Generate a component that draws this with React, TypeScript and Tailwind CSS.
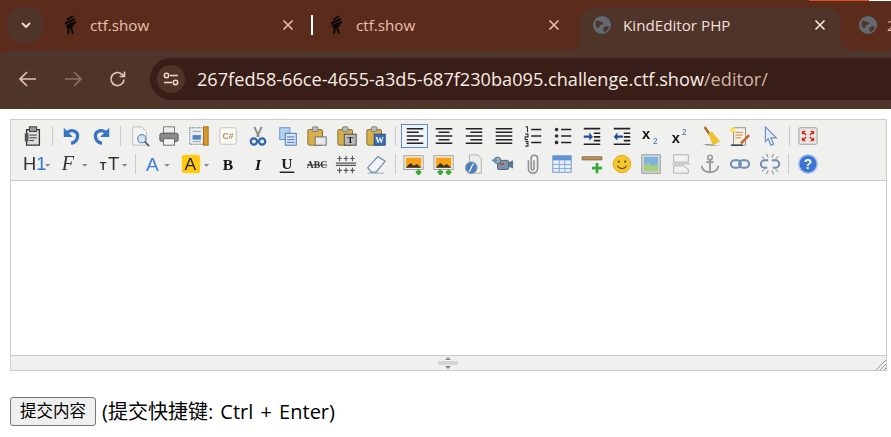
import type { ReactNode } from "react";

const S = ({ children, w = 22 }: { children: ReactNode; w?: number }) => (
  <svg width={w} height="22" viewBox={`0 0 ${(w * 24) / 22} 24`} className="blur-[0.35px]">
    {children}
  </svg>
);

const Arrow = ({ flip }: { flip?: boolean }) => (
  <g transform={flip ? "translate(24,0) scale(-1,1)" : undefined}>
    <path d="M7 8c5-4 12-1 11 5-.4 3-3 6-7 7" fill="none" stroke="#3b74c4" strokeWidth="3.6" />
    <path d="M3 3v10h10z" fill="#3b74c4" />
  </g>
);

const Clip = ({ children }: { children?: ReactNode }) => (
  <>
    <rect x="2" y="5" width="16" height="17" rx="1.5" fill="#d7b04a" stroke="#7d6a30" />
    <rect x="7" y="2" width="6" height="5" rx="1" fill="#bdbdbd" stroke="#777" />
    {children}
  </>
);

const Img = ({ plus }: { plus: number }) => (
  <>
    <rect x="1" y="3" width="21" height="15" fill="#f3f3f3" stroke="#999" />
    <rect x="3" y="5" width="17" height="11" fill="#f6a313" />
    <path d="M3 16l5-5 4 3 3-2 5 4z" fill="#3a3026" />
    {plus > 1 && <path d="M5 21h6M8 18v6" stroke="#34a838" strokeWidth="2.6" />}
    <path d="M14 21h6M17 18v6" stroke="#34a838" strokeWidth="2.6" />
  </>
);

const Caret = ({ x }: { x: number }) => <path d="M0 0h6l-3 3z" fill="#888" transform={`translate(${x},12)`} />;

const Btn = ({ children, active, w }: { children: ReactNode; active?: boolean; w?: string }) => (
  <div className={`flex h-[28px] shrink-0 items-center justify-center ${w ?? "w-[29.6px]"}`}>
    <div
      className={
        active
          ? "flex h-[24px] w-[27px] items-center justify-center border border-[#5c8ccb] bg-[#f0f4fa]"
          : "flex items-center justify-center"
      }
    >
      {children}
    </div>
  </div>
);

const Sep = () => (
  <div className="flex h-[28px] w-[8.8px] shrink-0 justify-center pt-[4px]">
    <div className="h-[20px] w-px bg-[#c8c8c8]" />
  </div>
);

const row1: (ReactNode | null)[] = [
  <S><path d="M5 5h14v17H5z" fill="#ddd" stroke="#333" strokeWidth="1.4" /><rect x="8" y="2" width="8" height="5" fill="#999" stroke="#333" /><path d="M8 11h8M8 14h8M8 17h5" stroke="#333" /><path d="M3 9h4v9H3z" fill="#555" /></S>,
  null,
  <S><Arrow /></S>,
  <S><Arrow flip /></S>,
  null,
  <S><path d="M4 2h10l5 5v15H4z" fill="#f4f4f4" stroke="#bbb" /><circle cx="14" cy="15" r="4.5" fill="#d4e6f6" stroke="#6d8fb0" strokeWidth="1.4" /><path d="M17 18l5 5" stroke="#555" strokeWidth="1.8" /></S>,
  <S><rect x="6" y="2" width="12" height="7" fill="#eee" stroke="#777" /><rect x="2" y="9" width="20" height="9" rx="2" fill="#8b8b8b" stroke="#555" /><rect x="6" y="15" width="12" height="7" fill="#f3f3f3" stroke="#666" /></S>,
  <S><rect x="2" y="3" width="15" height="18" fill="#e8eef4" stroke="#666" strokeDasharray="1.4 1" /><rect x="5" y="11" width="9" height="5" fill="#4b86c6" /><path d="M5 7h9M5 18h9" stroke="#999" /><rect x="17" y="2" width="5" height="20" fill="#d89a2b" stroke="#9a6a10" /></S>,
  <S><rect x="3" y="3" width="18" height="18" rx="2" fill="#fbfaf5" stroke="#bbb" /><text x="12" y="15.5" textAnchor="middle" fontSize="9.5" fontWeight="700" fill="#a8946a" fontFamily="Liberation Sans">C#</text></S>,
  <S><path d="M8 2l5 11M16 2l-5 11" stroke="#8e8e8e" strokeWidth="2.2" /><circle cx="7.5" cy="18" r="3.4" fill="none" stroke="#2f63b4" strokeWidth="2.4" /><circle cx="16.5" cy="18" r="3.4" fill="none" stroke="#2f63b4" strokeWidth="2.4" /></S>,
  <S><rect x="3" y="3" width="11" height="13" fill="#b7d3f2" stroke="#5d8fca" /><rect x="9" y="9" width="12" height="13" fill="#d5e5f7" stroke="#3f70b0" /><path d="M11 13h8M11 16h8M11 19h8" stroke="#3f70b0" /></S>,
  <S><Clip><rect x="10" y="13" width="12" height="9" fill="#e8e8e8" stroke="#666" /></Clip></S>,
  <S><Clip><rect x="9" y="10" width="13" height="12" fill="#bbb" stroke="#444" /><text x="15.5" y="20" textAnchor="middle" fontSize="10" fontWeight="700" fill="#111" fontFamily="Liberation Serif">T</text></Clip></S>,
  <S><Clip><rect x="10" y="10" width="12" height="12" fill="#3b6db5" stroke="#1f4a87" /><text x="16" y="20" textAnchor="middle" fontSize="9.5" fontWeight="700" fill="#fff" fontFamily="Liberation Serif">W</text></Clip></S>,
  null,
  <S><path d="M3 5h18M3 9h13M3 13h18M3 17h13M3 21h18" stroke="#222" strokeWidth="1.7" transform="translate(0,-1)" /></S>,
  <S><path d="M3 5h18M6 9h12M3 13h18M6 17h12M3 21h18" stroke="#222" strokeWidth="1.7" transform="translate(0,-1)" /></S>,
  <S><path d="M3 5h18M8 9h13M3 13h18M8 17h13M3 21h18" stroke="#222" strokeWidth="1.7" transform="translate(0,-1)" /></S>,
  <S><path d="M3 5h18M3 9h18M3 13h18M3 17h18M3 21h18" stroke="#222" strokeWidth="1.7" transform="translate(0,-1)" /></S>,
  <S><path d="M10 5h11M10 12h11M10 19h11" stroke="#222" strokeWidth="1.7" /><path d="M4 2h2v6M3.5 10h3v3h-3v3h3M3.5 18h3v2h-2 2v3h-3" stroke="#333" strokeWidth="1.2" fill="none" /></S>,
  <S><path d="M10 5h11M10 12h11M10 19h11" stroke="#222" strokeWidth="1.7" /><circle cx="5" cy="5" r="2" fill="#333" /><circle cx="5" cy="12" r="2" fill="#333" /><circle cx="5" cy="19" r="2" fill="#333" /></S>,
  <S><path d="M3 4h18M14 9h7M14 13h7M14 17h7M3 21h18" stroke="#222" strokeWidth="1.8" /><path d="M3 11.500h6V8l4 5-4 4v-3H3z" fill="#1e4f96" /></S>,
  <S><path d="M3 4h18M14 9h7M14 13h7M14 17h7M3 21h18" stroke="#222" strokeWidth="1.8" /><path d="M13 11.500H7V8l-4 5 4 4v-3h6z" fill="#1e4f96" /></S>,
  <S><text x="1" y="15" fontSize="16" fontWeight="700" fill="#111" fontFamily="Liberation Sans">x</text><text x="13" y="21" fontSize="9" fill="#3a68a8" fontFamily="Liberation Sans">2</text></S>,
  <S><text x="2" y="20" fontSize="16" fontWeight="700" fill="#111" fontFamily="Liberation Sans">x</text><text x="13" y="11" fontSize="9" fill="#3a68a8" fontFamily="Liberation Sans">2</text></S>,
  <S><path d="M5 2l6 9" stroke="#b0651a" strokeWidth="2.6" /><path d="M9 9l4-2 9 11-8 4z" fill="#f0c232" /><path d="M3 21c6 2 14 2 18 1" stroke="#ddd" /></S>,
  <S><rect x="5" y="3" width="13" height="19" fill="#f6f1e2" stroke="#8a8a8a" /><path d="M7 8h8M7 11h8M7 14h6" stroke="#d07a3b" /><path d="M1 2l3 2 3-2-1 3 2 2H5l-1 3-1-3H0l2-2z" fill="#ffe14a" /><path d="M12 19l9-9 2 2-9 9z" fill="#c8642c" /><path d="M2 22h13" stroke="#234" strokeWidth="1.5" /></S>,
  <S><path d="M7 2l12 12h-6l3 7-3 1-3-7-3 3z" fill="#e3edf9" stroke="#6f92bf" strokeWidth="1.3" /></S>,
  null,
  <S><rect x="2" y="3" width="20" height="18" rx="1.500" fill="#e8e4e0" stroke="#9a9a9a" /><path d="M6 7l4 4M6 7v3M6 7h3M18 7l-4 4M18 7v3M18 7h-3M6 17l4-4M6 17v-3M6 17h3M18 17l-4-4M18 17v-3M18 17h-3" stroke="#c9281e" strokeWidth="1.5" fill="none" /></S>,
];

const row2: (ReactNode | null)[] = [
  <S w={30}><text x="1" y="19" fontSize="20" fill="#333" fontFamily="Liberation Sans">H<tspan fill="#2f74d0">1</tspan></text><Caret x={25} /></S>,
  <S w={30}><text x="2" y="19" fontSize="22" fontStyle="italic" fill="#333" fontFamily="Liberation Serif">F</text><Caret x={24} /></S>,
  <S w={30}><text x="2" y="19" fontSize="12" fontWeight="700" fill="#333" fontFamily="Liberation Sans">T</text><text x="11" y="19" fontSize="20" fill="#333" fontFamily="Liberation Sans">T</text><Caret x={26} /></S>,
  null,
  <S w={26}><text x="1" y="20" fontSize="21" fill="#3a7ee0" fontFamily="Liberation Sans">A</text><Caret x={21} /></S>,
  <S w={30}><rect x="2" y="2" width="20" height="20" rx="3" fill="#ffc90f" /><text x="5" y="19" fontSize="19" fill="#222" fontFamily="Liberation Sans">A</text><Caret x={26} /></S>,
  <S><text x="12" y="18" textAnchor="middle" fontSize="17" fontWeight="700" fill="#111" fontFamily="Liberation Serif">B</text></S>,
  <S><text x="12" y="18" textAnchor="middle" fontSize="17" fontWeight="700" fontStyle="italic" fill="#111" fontFamily="Liberation Serif">I</text></S>,
  <S><text x="12" y="17" textAnchor="middle" fontSize="17" fontWeight="700" fill="#222" fontFamily="Liberation Serif">U</text><path d="M4 21h16" stroke="#222" strokeWidth="1.6" /></S>,
  <S><text x="12" y="16.5" textAnchor="middle" fontSize="10.5" fontWeight="700" fill="#333" fontFamily="Liberation Serif">ABC</text><path d="M1 13h22" stroke="#333" /></S>,
  <S><path d="M1 11h22M1 13.500h22" stroke="#555" strokeWidth="1.3" /><path d="M5 3v6M2.500 6h5M12 3v6M9.500 6h5M19 3v6M16.500 6h5M5 16v6M2.500 19h5M12 16v6M9.500 19h5M19 16v6M16.500 19h5" stroke="#556" strokeWidth="1.2" /></S>,
  <S><path d="M3 16L14 4l8 5-10 12H7z" fill="#f2f4f7" stroke="#7c93ab" strokeWidth="1.4" /><path d="M3 22h18" stroke="#8aa" /></S>,
  null,
  <S><Img plus={1} /></S>,
  <S><Img plus={2} /></S>,
  <S><path d="M7 2h9l4 4v16H7z" fill="#eee" stroke="#aaa" /><circle cx="9" cy="16" r="6.5" fill="#4a7ec0" stroke="#aaa" /><path d="M6 20c3 0 3-8 6-8" stroke="#fff" strokeWidth="1.3" fill="none" /></S>,
  <S><rect x="6" y="8" width="12" height="10" rx="1.5" fill="#7d93ad" stroke="#4a5c74" /><circle cx="6" cy="8" r="3.5" fill="#9eb2c8" stroke="#4a5c74" /><path d="M18 10l5-2v9l-5-2z" fill="#5c7590" /><path d="M0 8h6" stroke="#4a8ec8" strokeWidth="2" /><rect x="9" y="11" width="4" height="2" fill="#c03b2a" /></S>,
  <S><path d="M7 8v9a5 5 0 0 0 10 0V6a3.5 3.5 0 0 0-7 0v11a1.5 1.5 0 0 0 3 0V8" fill="none" stroke="#8f8f8f" strokeWidth="1.7" /></S>,
  <S><rect x="2" y="3" width="20" height="18" fill="#e8eff8" stroke="#6c95c8" /><rect x="2" y="3" width="20" height="5" fill="#5f92d6" /><path d="M9 8v13M15 8v13M2 12.500h20M2 17h20" stroke="#7ba3d6" /></S>,
  <S><rect x="1" y="4" width="22" height="3.6" rx="1" fill="#b8935a" stroke="#6e5531" strokeWidth=".7" /><path d="M16 11v4h-4v3h4v4h3v-4h4v-3h-4v-4z" fill="#35a83a" /></S>,
  <S><circle cx="12" cy="12" r="9.5" fill="#f5c628" stroke="#e0a717" /><circle cx="8.5" cy="9.5" r="1.2" fill="#553" /><circle cx="15.5" cy="9.5" r="1.2" fill="#553" /><path d="M7 14c2 4 8 4 10 0" fill="none" stroke="#754" strokeWidth="1.3" /></S>,
  <S><rect x="2" y="2" width="20" height="20" fill="#e3e6e2" stroke="#888" /><rect x="4" y="4" width="16" height="16" fill="#7eb3e0" /><path d="M4 20v-6l5-3 4 3 7-2v8z" fill="#a9ce7e" /></S>,
  <S><path d="M4 2h16v8H4zM4 14h11l5 4v4H4z" fill="#f1f1f1" stroke="#aaa" /><path d="M2 12h20" stroke="#aaa" /></S>,
  <S><circle cx="12" cy="5" r="2.5" fill="none" stroke="#9a9a9a" strokeWidth="1.8" /><path d="M12 7v14M8 10h8M3 14c0 5 5 7 9 7s9-2 9-7" fill="none" stroke="#9a9a9a" strokeWidth="2" /></S>,
  <S><rect x="2" y="8" width="11" height="8" rx="4" fill="none" stroke="#6f8eb2" strokeWidth="2.2" /><rect x="11" y="8" width="11" height="8" rx="4" fill="none" stroke="#6f8eb2" strokeWidth="2.2" /></S>,
  <S><path d="M10 8H6a4 4 0 0 0 0 8h3M14 8h4a4 4 0 0 1 0 8h-3" fill="none" stroke="#6f8eb2" strokeWidth="2.2" /><path d="M8 1l2 4M16 1l-2 4M3 4l3 2M21 4l-3 2M8 23l2-4M16 23l-2-4M3 20l3-2M21 20l-3-2" stroke="#6c7a8a" /></S>,
  null,
  <S><circle cx="12" cy="12" r="10" fill="#3a76d4" stroke="#a4bde4" strokeWidth="1.5" /><text x="12" y="17.5" textAnchor="middle" fontSize="15" fontWeight="700" fill="#fff" fontFamily="Liberation Sans">?</text></S>,
];

const row2Widths = ["w-[38px]", "w-[38px]", "w-[38px]", "", "w-[36px]", "w-[37px]"];

const Close = ({ c }: { c: string }) => (
  <svg width="12" height="12" viewBox="0 0 12 12">
    <path d="M1.500 1.500l9 9M10.500 1.500l-9 9" stroke={c} strokeWidth="1.6" />
  </svg>
);

const Ninja = () => (
  <svg width="16" height="20" viewBox="0 0 16 20">
    <path d="M11 1L5 5M13 4L3 8.500M14 7L4 11M12 10L5 13M7 12L6 19M9 12l2 7" fill="none" stroke="#0c0a08" strokeWidth="2" />
  </svg>
);

const Globe = () => (
  <svg width="18" height="18" viewBox="0 0 18 18">
    <circle cx="9" cy="9" r="9" fill="#606a70" />
    <path d="M3 5c3-1 4 1 6 1s1 3-1 3-1 3-3 3-3-4-2-7zM10 12c2-2 5-2 6-1-1 3-3 5-5 5z" fill="#4f342a" />
  </svg>
);

const Tab = ({ title, close }: { title: string; close: string }) => (
  <div className="flex h-[34px] items-center">
    <Ninja />
    <span className="ml-[12px] text-[15.2px] text-[#e8c0b0]">{title}</span>
    <span className="ml-auto"><Close c={close} /></span>
  </div>
);

export default function App() {
  return (
    <div className="h-[437px] w-[891px] overflow-hidden bg-white font-['Open_Sans','Noto_Sans_CJK_SC',sans-serif]">
      <div className="bg-[#5b2c1c]">
        <div className="relative flex h-[50px] pt-[8px]">
          <div className="absolute right-0 top-0 flex h-px">
            <div className="w-[60px] bg-[#d9501e]" />
            <div className="w-[22px] bg-white" />
          </div>
          <div className="ml-[8px] flex h-[34px] w-[35px] shrink-0 items-center justify-center rounded-[12px] bg-[#4f342a]">
            <svg width="12" height="12" viewBox="0 0 12 12">
              <path d="M2 4l4 4 4-4" fill="none" stroke="#f4e2da" strokeWidth="1.8" />
            </svg>
          </div>
          <div className="ml-[19px] w-[232px] shrink-0">
            <Tab title="ctf.show" close="#e8c0b0" />
          </div>
          <div className="ml-[17px] mt-[7px] h-[20px] w-[2px] shrink-0 bg-white" />
          <div className="ml-[15px] w-[232px] shrink-0">
            <Tab title="ctf.show" close="#e8c0b0" />
          </div>
          <div className="relative ml-[21px] flex h-[42px] w-[259px] shrink-0 rounded-t-[12px] bg-[#4f342a] pl-[12px] pr-[14px]">
            <div className="absolute bottom-0 left-[-12px] h-[12px] w-[12px] bg-[#4f342a]">
              <div className="h-full w-full rounded-br-[12px] bg-[#5b2c1c]" />
            </div>
            <div className="absolute bottom-0 right-[-12px] h-[12px] w-[12px] bg-[#4f342a]">
              <div className="h-full w-full rounded-bl-[12px] bg-[#5b2c1c]" />
            </div>
            <div className="flex h-[34px] w-full items-center">
              <Globe />
              <span className="ml-[12px] text-[15.2px] text-[#f3dfd7]">KindEditor PHP</span>
              <span className="ml-auto"><Close c="#f6e6df" /></span>
            </div>
          </div>
          <div className="ml-[19px] flex h-[34px] shrink-0 items-center">
            <Globe />
            <span className="ml-[10px] text-[15px] text-[#e8c0b0]">2</span>
          </div>
        </div>

        <div className="flex h-[59px] items-center rounded-tl-[10px] bg-[#4f342a] pb-[1px]">
          <div className="ml-[18px] flex items-center gap-[25px]">
            <svg width="20" height="20" viewBox="0 0 20 20">
              <path d="M18 10H3M9 3l-7 7 7 7" fill="none" stroke="#e8c0b0" strokeWidth="1.7" />
            </svg>
            <svg width="20" height="20" viewBox="0 0 20 20">
              <path d="M2 10h15M11 3l7 7-7 7" fill="none" stroke="#8f7267" strokeWidth="1.7" />
            </svg>
            <svg width="20" height="20" viewBox="0 0 20 20">
              <path d="M16 10.500a6.500 6.500 0 1 1-2-5.200L16.500 7.500M16.500 2.500v5h-5" fill="none" stroke="#e8c0b0" strokeWidth="1.7" />
            </svg>
          </div>
          <div className="ml-[22px] flex h-[42px] flex-1 items-center rounded-l-[21px] bg-[#381e16] pl-[7px]">
            <div className="flex h-[28px] w-[28px] items-center justify-center rounded-full bg-[#4f342a]">
              <svg width="16" height="16" viewBox="0 0 16 16">
                <path d="M7 4.500h8M1 11.500h8" stroke="#f0d6cb" strokeWidth="1.500" />
                <circle cx="3.500" cy="4.500" r="2.200" fill="none" stroke="#f0d6cb" strokeWidth="1.500" />
                <circle cx="12.500" cy="11.500" r="2.200" fill="none" stroke="#f0d6cb" strokeWidth="1.500" />
              </svg>
            </div>
            <span className="ml-[12px] whitespace-nowrap text-[18.15px] leading-none text-[#f8ece6]">
              267fed58-66ce-4655-a3d5-687f230ba095.challenge.ctf.show
              <span className="text-[#cfb3a7]">/editor/</span>
            </span>
          </div>
        </div>
      </div>

      <div className="ml-[10px] mt-[10px] w-[877px] border border-[#cccccc]">
        <div className="flex h-[61px] flex-col justify-center border-b border-[#cccccc] bg-[#f0f0ee] pb-[1px] pl-[7.500px]">
          <div className="flex h-[28px]">
            {row1.map((n, i) => (n === null ? <Sep key={i} /> : <Btn key={i} active={i === 15}>{n}</Btn>))}
          </div>
          <div className="-ml-[1px] flex h-[28px]">
            {row2.map((n, i) => (n === null ? <Sep key={i} /> : <Btn key={i} w={row2Widths[i] || undefined}>{n}</Btn>))}
          </div>
        </div>
        <div className="h-[174px] bg-white" />
        <div className="flex h-[15px] items-center border-t border-[#cccccc] bg-[#f0f0ee]">
          <svg width="20" height="12" viewBox="0 0 20 12" className="ml-[427px]">
            <path d="M0 5h20M0 7h20" stroke="#bbb" />
            <path d="M7 3h6l-3-3zM7 9h6l-3 3z" fill="#888" />
          </svg>
          <svg width="11" height="11" viewBox="0 0 11 11" className="ml-auto mt-[2px]">
            <path d="M1 11L11 1M5 11l6-6M9 11l2-2" stroke="#999" />
          </svg>
        </div>
      </div>

      <div className="ml-[10px] mt-[26px] flex h-[29px] items-center">
        <button className="h-[29px] w-[86px] rounded-[3px] border border-[#767676] bg-[#efefef] text-[16.5px] leading-none text-black">
          提交内容
        </button>
        <span className="ml-[6px] whitespace-nowrap text-[20px] text-black [word-spacing:2px]">(提交快捷键: Ctrl + Enter)</span>
      </div>
    </div>
  );
}
